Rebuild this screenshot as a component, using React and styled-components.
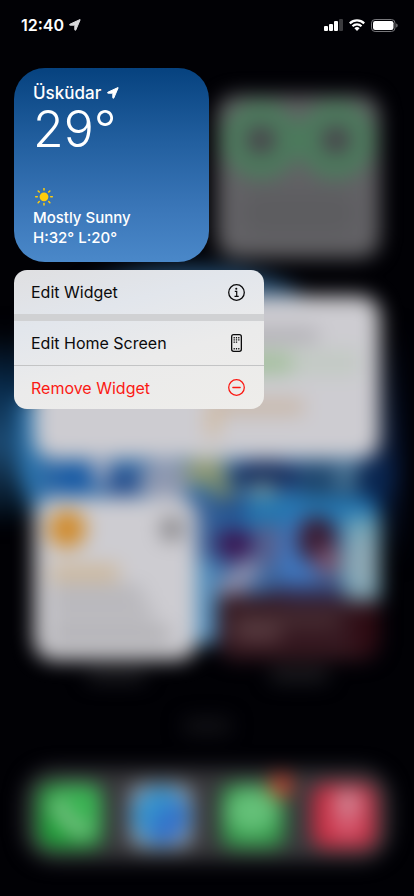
import React from "react";
import styled, { createGlobalStyle, css } from "styled-components";

const GlobalStyle = createGlobalStyle`
  *, *::before, *::after { box-sizing: border-box; }
  html, body { margin: 0; background: #010105; }
  body {
    font-family: Inter, "Liberation Sans", sans-serif;
    -webkit-font-smoothing: antialiased;
  }
`;

const Screen = styled.div`
  display: grid;
  grid-template-columns: 100%;
  min-height: 100vh;
  overflow: hidden;
  background: #010105;
`;

/* ---------- blurred home screen ---------- */

const HomeScreen = styled.div`
  grid-area: 1 / 1;
  position: relative;
  display: flex;
  flex-direction: column;
  padding: 95px 34px 0;
  filter: blur(10px);
`;

const Wallpaper = styled.svg`
  position: absolute;
  top: 0;
  left: 0;
  width: 100%;
  height: 100%;
  overflow: visible;
`;

const WidgetGrid = styled.div`
  position: relative;
  display: grid;
  grid-template-columns: 1fr 1fr;
  column-gap: 20px;
  row-gap: 16px;
`;

const WidgetSlot = styled.div`
  display: flex;
  flex-direction: column;
  align-items: center;
  gap: 8px;
  ${(p) => p.$wide && css`grid-column: 1 / -1;`}
`;

const WidgetBody = styled.div`
  width: 100%;
  aspect-ratio: ${(p) => (p.$wide ? "346 / 163" : "1")};
  border-radius: 20px;
  overflow: hidden;
  background: ${(p) => p.$tint};
`;

const WidgetArt = styled.svg`
  display: block;
  width: 100%;
  height: 100%;
`;

const WidgetLabel = styled.div`
  width: 60px;
  height: 14px;
  border-radius: 7px;
  background: ${(p) => (p.$visible ? "#1d1d21" : "transparent")};
`;

const PageDots = styled.div`
  position: relative;
  align-self: center;
  width: 50px;
  height: 16px;
  margin: auto 0;
  border-radius: 8px;
  background: #121216;
`;

const Dock = styled.div`
  position: relative;
  display: flex;
  justify-content: space-between;
  margin: 0 -10px 35px;
  padding: 15px 14px 13px;
  border-radius: 30px;
  background: #38383c;
`;

const DockIcon = styled.svg`
  width: 64px;
  height: 64px;
  overflow: visible;
`;

/* ---------- sharp foreground ---------- */

const Foreground = styled.main`
  grid-area: 1 / 1;
  z-index: 1;
  display: flex;
  flex-direction: column;
  align-items: flex-start;
  padding: 0 14px;
`;

const StatusBar = styled.header`
  display: flex;
  align-items: center;
  justify-content: space-between;
  align-self: stretch;
  height: 50px;
  margin-bottom: 18px;
  padding: 0 2px 0 7px;
  color: #fff;
`;

const Clock = styled.div`
  display: flex;
  align-items: center;
  gap: 5px;
  font-size: 16px;
  font-weight: 600;
  line-height: 20px;
`;

const Indicators = styled.div`
  display: flex;
  align-items: center;
  gap: 6px;
`;

const Icon = styled.svg`
  display: block;
  flex: none;
`;

const WeatherCard = styled.section`
  display: flex;
  flex-direction: column;
  width: 195px;
  height: 194px;
  padding: 15px 19px 14px;
  border-radius: 31px;
  background: linear-gradient(#06427f, #225f9f 38%, #3a76b8 72%, #4a88c9);
  color: #fff;
`;

const City = styled.h1`
  display: flex;
  align-items: center;
  gap: 6px;
  margin: 0;
  font-size: 17px;
  font-weight: 500;
  line-height: 20px;
`;

const Temperature = styled.p`
  margin: 0 0 auto;
  font-size: 50px;
  font-weight: 300;
  line-height: 52px;
`;

const Conditions = styled.p`
  margin: 0;
  font-size: 15px;
  font-weight: 500;
  line-height: 20px;
`;

const Menu = styled.div`
  width: 250px;
  margin-top: 8px;
  border-radius: 13px;
  overflow: hidden;
  background: linear-gradient(165deg, #dfdfe1, #e2e6ec 30%, #ebebeb 60%, #eeedea);
`;

const MenuItem = styled.button`
  display: flex;
  align-items: center;
  justify-content: space-between;
  width: 100%;
  height: ${(p) => (p.$danger ? "43px" : "44px")};
  padding: 0 19px 0 17px;
  border: 0;
  background: none;
  color: ${(p) => (p.$danger ? "#fb1a14" : "#0b0b0c")};
  font: 400 16px/20px Inter, "Liberation Sans", sans-serif;
  text-align: left;
`;

const MenuDivider = styled.div`
  height: ${(p) => (p.$thick ? "7px" : "1px")};
  background: ${(p) => (p.$thick ? "#d0d1d3" : "#c3c4c5")};
`;

const MenuIconBox = styled.span`
  display: flex;
  justify-content: center;
  width: 17px;
`;

const LocationArrow = ({ size, color }) => (
  <Icon width={size} height={size} viewBox="0 0 12 12" aria-hidden="true">
    <path
      d="M11.1.9 6.8 11c-.3.5-1 .4-1-.2V6.6c0-.3-.2-.4-.4-.4H1.1c-.6 0-.8-.7-.2-1L10.900.6c.2-.1.3.1.2.3Z"
      fill={color}
      stroke={color}
      strokeWidth="1"
      strokeLinejoin="round"
    />
  </Icon>
);

const SignalIcon = () => (
  <Icon width="19" height="12" viewBox="0 0 19 12" aria-label="Signal">
    <rect x="0" y="7" width="4" height="5" rx="1" fill="#fff" />
    <rect x="5" y="5" width="4" height="7" rx="1" fill="#fff" />
    <rect x="10" y="2" width="4" height="10" rx="1" fill="#fff" />
    <rect x="15" y="0" width="4" height="12" rx="1" fill="#3b3b3e" />
  </Icon>
);

const WifiIcon = () => (
  <Icon width="16" height="12" viewBox="0 0 16 12" aria-label="Wi-Fi">
    <g fill="none" stroke="#fff" strokeWidth="2.2">
      <path d="M.8 4.400a10.300 10.300 0 0 1 14.400 0" />
      <path d="M3.500 7.200a6.400 6.400 0 0 1 9 0" />
    </g>
    <path d="M8 11.900 5.400 9.200a3.700 3.700 0 0 1 5.200 0Z" fill="#fff" />
  </Icon>
);

const BatteryIcon = () => (
  <Icon width="27" height="13" viewBox="0 0 27 13" aria-label="Battery">
    <rect x=".5" y=".5" width="23.5" height="12" rx="3.6" fill="none" stroke="#77777b" />
    <rect x="2" y="2" width="20.5" height="9" rx="2.2" fill="#fff" />
    <path d="M25.2 4.500c1.900.6 1.900 3.400 0 4Z" fill="#77777b" />
  </Icon>
);

const SunIcon = () => (
  <Icon width="21" height="20" viewBox="0 0 21 20" aria-hidden="true">
    <circle cx="11" cy="8.800" r="4.400" fill="#ffcc0c" />
    <g stroke="#ffcc0c" strokeWidth="1.500" strokeLinecap="round">
      {[0, 45, 90, 135, 180, 225, 270, 315].map((a) => (
        <path key={a} d="M11 .5v1.600" transform={`rotate(${a} 11 8.800)`} />
      ))}
    </g>
  </Icon>
);

const InfoIcon = () => (
  <Icon width="17" height="17" viewBox="0 0 17 17" aria-hidden="true">
    <circle cx="8.5" cy="8.5" r="7.8" fill="none" stroke="#0b0b0c" strokeWidth="1.3" />
    <circle cx="8.3" cy="4.7" r="1.05" fill="#0b0b0c" />
    <path d="M6.8 7.3h1.9v5M6.5 12.4h4.2" fill="none" stroke="#0b0b0c" strokeWidth="1.2" />
  </Icon>
);

const PhoneIcon = () => (
  <Icon width="11" height="18" viewBox="0 0 11 18" aria-hidden="true">
    <rect x=".65" y=".65" width="9.7" height="16.7" rx="2" fill="none" stroke="#0b0b0c" strokeWidth="1.3" />
    <g fill="#0b0b0c">
      {[[2.5, 3], [4.8, 3], [7.1, 3], [2.5, 5.2], [4.8, 5.2], [7.1, 5.2], [2.5, 7.4], [4.8, 7.4], [2.5, 14], [4.8, 14], [7.1, 14]].map(
        ([x, y]) => <rect key={`${x}-${y}`} x={x} y={y} width="1.4" height="1.4" rx=".4" />
      )}
    </g>
  </Icon>
);

const RemoveIcon = () => (
  <Icon width="17" height="17" viewBox="0 0 17 17" aria-hidden="true">
    <circle cx="8.5" cy="8.5" r="7.8" fill="none" stroke="#fb1a14" strokeWidth="1.3" />
    <path d="M4.9 8.5h7.2" stroke="#fb1a14" strokeWidth="1.4" strokeLinecap="round" />
  </Icon>
);

const Planet = () => (
  <Wallpaper viewBox="0 0 414 896" preserveAspectRatio="xMidYMid slice" aria-hidden="true">
    <defs>
      <linearGradient id="edgeLeft" x1="0" y1="0" x2="0" y2="1">
        <stop offset="0" stopColor="#010105" />
        <stop offset=".3" stopColor="#082a4a" />
        <stop offset=".6" stopColor="#1c4a72" />
        <stop offset="1" stopColor="#010a14" />
      </linearGradient>
      <linearGradient id="edgeRight" x1="0" y1="0" x2="0" y2="1">
        <stop offset="0" stopColor="#010105" />
        <stop offset=".6" stopColor="#08193a" />
        <stop offset="1" stopColor="#010105" />
      </linearGradient>
    </defs>
    <rect x="-40" y="330" width="70" height="190" fill="url(#edgeLeft)" />
    <rect x="376" y="330" width="26" height="230" fill="url(#edgeRight)" />
    <ellipse cx="190" cy="310" rx="120" ry="44" fill="#244b6e" />
    <path d="M18 400h50v125H40q-18-30-22-60Z" fill="#2b73ac" />
    <path d="M40 450h330v50H40Z" fill="#2d68a4" />
    <ellipse cx="76" cy="479" rx="20" ry="15" fill="#175aa5" />
    <ellipse cx="101" cy="472" rx="9" ry="14" fill="#a3aac0" />
    <ellipse cx="124" cy="484" rx="17" ry="13" fill="#264d8c" />
    <ellipse cx="165" cy="480" rx="26" ry="20" fill="#8e98b0" />
    <ellipse cx="206" cy="472" rx="22" ry="15" fill="#8d9874" />
    <ellipse cx="222" cy="490" rx="16" ry="9" fill="#71846a" transform="rotate(30 222 490)" />
    <ellipse cx="266" cy="476" rx="36" ry="16" fill="#1a305e" />
    <ellipse cx="262" cy="491" rx="16" ry="8" fill="#73979c" />
    <rect x="300" y="462" width="70" height="40" fill="#20486f" />
    <ellipse cx="346" cy="477" rx="13" ry="14" fill="#467191" />
    <ellipse cx="374" cy="480" rx="16" ry="28" fill="#0a2752" />
    <rect x="193" y="500" width="28" height="70" fill="#365f96" />
    <rect x="193" y="560" width="28" height="84" fill="#4e8dbc" />
  </Wallpaper>
);

const BatteriesWidget = () => (
  <WidgetSlot>
    <WidgetBody $tint="#626165">
      <WidgetArt viewBox="0 0 163 163" aria-hidden="true">
        <g fill="none" stroke="#4b7a5c" strokeWidth="24">
          <circle cx="44" cy="45" r="27" />
          <circle cx="119" cy="45" r="27" />
        </g>
        <g fill="#434047">
          <circle cx="44" cy="45" r="13" />
          <circle cx="119" cy="45" r="13" />
        </g>
        <rect x="26" y="95" width="112" height="46" rx="20" fill="#5d5d60" />
      </WidgetArt>
    </WidgetBody>
    <WidgetLabel />
  </WidgetSlot>
);

const CalendarWidget = () => (
  <WidgetSlot $wide>
    <WidgetBody $wide $tint="#cdccd1">
      <WidgetArt viewBox="0 0 346 163" aria-hidden="true">
        <rect x="190" y="34" width="94" height="11" rx="4" fill="#a8a6ac" />
        <rect x="186" y="54" width="140" height="25" rx="4" fill="#c2cac3" />
        <rect x="190" y="56" width="68" height="22" rx="4" fill="#a4c09e" />
        <rect x="174" y="104" width="96" height="14" rx="4" fill="#c8b4a2" />
        <rect x="174" y="110" width="10" height="32" rx="4" fill="#d3b795" />
      </WidgetArt>
    </WidgetBody>
    <WidgetLabel />
  </WidgetSlot>
);

const NotesWidget = () => (
  <WidgetSlot>
    <WidgetBody $tint="#cdccd1">
      <WidgetArt viewBox="0 0 163 163" aria-hidden="true">
        <circle cx="33" cy="32" r="19" fill="#d08b2c" />
        <circle cx="138" cy="32" r="12" fill="#858488" />
        <rect x="16" y="68" width="69" height="16" rx="3" fill="#cdb696" />
        <g fill="#afaeb2">
          <rect x="16" y="90" width="93" height="12" rx="3" />
          <rect x="16" y="109" width="103" height="12" rx="3" />
          <rect x="16" y="129" width="120" height="18" rx="3" />
        </g>
      </WidgetArt>
    </WidgetBody>
    <WidgetLabel $visible />
  </WidgetSlot>
);

const PhotoWidget = () => (
  <WidgetSlot>
    <WidgetBody $tint="#3b68a0">
      <WidgetArt viewBox="0 0 163 163" aria-hidden="true">
        <rect width="163" height="32" fill="#2476b0" />
        <path d="M-5-5h35v28H-5Z" fill="#24508e" />
        <ellipse cx="17" cy="47" rx="22" ry="17" fill="#391955" />
        <ellipse cx="51" cy="48" rx="16" ry="22" fill="#55608f" />
        <path d="M0 88 28 60 46 70 20 104H0Z" fill="#8b8daa" />
        <ellipse cx="82" cy="62" rx="20" ry="44" fill="#3f76bd" />
        <ellipse cx="100" cy="43" rx="20" ry="24" fill="#3a1d35" />
        <ellipse cx="111" cy="64" rx="14" ry="15" fill="#78516b" />
        <path d="M128 20h35v86h-42Z" fill="#6fa3b6" />
        <ellipse cx="146" cy="67" rx="13" ry="32" fill="#91a9b5" />
        <rect x="52" y="88" width="76" height="17" fill="#353863" />
        <path d="M0 98h52l20 5h91v60H0Z" fill="#351820" />
        <rect x="14" y="117" width="108" height="12" rx="6" fill="#4c3338" />
        <rect x="16" y="129" width="48" height="16" rx="6" fill="#57393e" />
        <rect x="137" y="112" width="26" height="46" fill="#2e0b13" />
      </WidgetArt>
    </WidgetBody>
    <WidgetLabel $visible />
  </WidgetSlot>
);

const DockIcons = () => (
  <>
    <DockIcon viewBox="0 0 64 64" aria-hidden="true">
      <rect width="64" height="64" rx="14" fill="#1f9f38" />
      <path d="M22 0h28q14 0 14 16v42L20 12Z" fill="#3bb554" />
      <path d="M18 18Q24 40 47 48" fill="none" stroke="#87c590" strokeWidth="13" strokeLinecap="round" />
    </DockIcon>
    <DockIcon viewBox="0 0 64 64" aria-hidden="true">
      <rect width="64" height="64" rx="14" fill="#9ba0aa" />
      <circle cx="32" cy="32" r="29" fill="#3391cc" />
      <path d="M50 14 58 32Q55 56 36 60 20 58 22 40Z" fill="#3470ca" />
    </DockIcon>
    <DockIcon viewBox="0 0 64 64" aria-hidden="true">
      <rect width="64" height="64" rx="14" fill="#349a4a" />
      <ellipse cx="31" cy="27" rx="26" ry="23" fill="#64c078" />
      <circle cx="60" cy="2" r="12" fill="#c0412f" />
    </DockIcon>
    <DockIcon viewBox="0 0 64 64" aria-hidden="true">
      <rect width="64" height="64" rx="14" fill="#c82d42" />
      <path d="M22 13h30v30q-5 15-19 10-18-2-14-14Z" fill="#d35b70" />
      <ellipse cx="36" cy="17" rx="16" ry="11" fill="#cf8795" />
    </DockIcon>
  </>
);

const menuGroups = [
  { label: "Edit Widget", icon: InfoIcon },
  { divider: "thick" },
  { label: "Edit Home Screen", icon: PhoneIcon },
  { divider: "thin" },
  { label: "Remove Widget", icon: RemoveIcon, danger: true },
];

export default function App() {
  return (
    <Screen>
      <GlobalStyle />
      <HomeScreen aria-hidden="true">
        <Planet />
        <WidgetGrid>
          <WidgetSlot />
          <BatteriesWidget />
          <CalendarWidget />
          <NotesWidget />
          <PhotoWidget />
        </WidgetGrid>
        <PageDots />
        <Dock>
          <DockIcons />
        </Dock>
      </HomeScreen>

      <Foreground>
        <StatusBar>
          <Clock>
            <time>12:40</time>
            <LocationArrow size={12} color="#d9d9db" />
          </Clock>
          <Indicators>
            <SignalIcon />
            <WifiIcon />
            <BatteryIcon />
          </Indicators>
        </StatusBar>

        <WeatherCard>
          <City>
            Üsküdar
            <LocationArrow size={12} color="#fff" />
          </City>
          <Temperature>29°</Temperature>
          <SunIcon />
          <Conditions>Mostly Sunny</Conditions>
          <Conditions>H:32° L:20°</Conditions>
        </WeatherCard>

        <Menu role="menu">
          {menuGroups.map((entry, i) =>
            entry.divider ? (
              <MenuDivider key={i} $thick={entry.divider === "thick"} role="separator" />
            ) : (
              <MenuItem key={i} type="button" role="menuitem" $danger={entry.danger}>
                {entry.label}
                <MenuIconBox>
                  <entry.icon />
                </MenuIconBox>
              </MenuItem>
            )
          )}
        </Menu>
      </Foreground>
    </Screen>
  );
}
